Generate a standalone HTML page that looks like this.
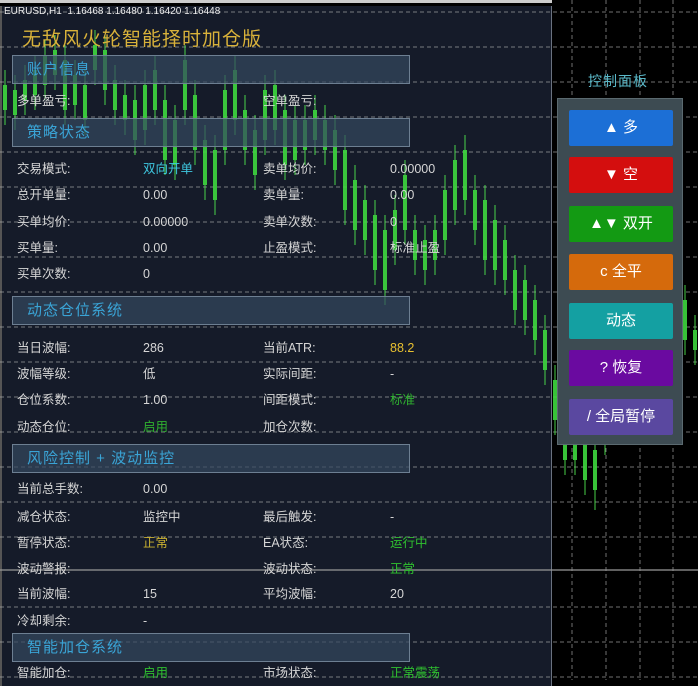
<!DOCTYPE html>
<html><head><meta charset="utf-8"><style>
*{margin:0;padding:0;box-sizing:border-box}
body{width:698px;height:680px;background:#000;position:relative;overflow:hidden;font-family:"Liberation Sans","Noto Sans CJK SC",sans-serif}
.abs{position:absolute}
#panel{position:absolute;left:0;top:6px;width:552px;height:680px;background:#151b29;border-right:1px solid #6a7280;border-left:2px solid #555}
.hdr{position:absolute;left:12px;width:398px;height:29px;background:rgba(52,72,95,0.7);border:1.5px solid #6d7f92;color:#3aa4d6;font-size:15px;line-height:27px;padding-left:14px;letter-spacing:1px}
.t{position:absolute;font-size:12.5px;line-height:16px;height:16px;color:#d6d6d6;white-space:nowrap}
.btn{position:absolute;left:569px;width:104px;height:36px;color:#fff;font-size:15px;text-align:center;line-height:36px;border-radius:2px}
</style></head><body>
<div id="panel"></div>
<svg class="abs" style="left:0;top:0" width="698" height="680">
<g stroke="#bbb" stroke-width="1" stroke-dasharray="4,3" opacity="0.6">
<path d="M0 12H698M0 47H698M0 82H698M0 117H698M0 152H698M0 187H698M0 222H698M0 257H698M0 292H698M0 327H698M0 362H698M0 397H698M0 432H698M0 467H698M0 502H698M0 537H698M0 607H698M0 642H698M0 677H698"/>
<path d="M572 0V680M606 0V680M640 0V680M673 0V680"/>
</g>
<path d="M0 570H698" stroke="#999" stroke-width="1.2"/>
<g opacity="0.9">
<g stroke="#4fe84f" stroke-width="1">
<path d="M5 70V125M15 75V130M25 65V115M35 55V110M45 40V100M55 35V90M65 45V125M75 60V120M85 70V135M95 30V85M105 35V105M115 65V125M125 80V135M135 85V155M145 70V145M155 55V125M165 85V175M175 105V180M185 45V125M195 80V165M205 125V200M215 135V215M225 75V165M235 55V135M245 95V165M255 115V190M265 75V155M275 70V145M285 95V180M295 105V175M305 105V165M315 95V155M325 105V165M335 115V185M345 135V225M355 165V245M365 185V255M375 200V285M385 215V305M395 195V265M405 160V245M415 215V275M425 225V285M435 215V275M445 175V255M455 145V225M465 135V215M475 175V245M485 185V275M495 205V285M505 225V295M515 255V325M525 265V335M535 285V355M545 315V385M555 365V435M565 405V475M575 415V475M585 430V495M595 435V510M605 385V455M615 355V425M625 315V395M635 285V355M645 265V335M655 235V305M665 245V315M675 265V335M685 285V355M695 315V365"/>
</g>
<g stroke="#3fd83f" stroke-width="4">
<path d="M5 85V110M15 90V115M25 80V100M35 70V95M45 55V85M55 50V75M65 60V110M75 75V105M85 85V120M95 45V70M105 50V90M115 80V110M125 95V120M135 100V140M145 85V130M155 70V110M165 100V160M175 120V165M185 60V110M195 95V150M205 140V185M215 150V200M225 90V150M235 70V120M245 110V150M255 130V175M265 90V140M275 85V130M285 110V165M295 120V160M305 120V150M315 110V140M325 120V150M335 130V170M345 150V210M355 180V230M365 200V240M375 215V270M385 230V290M395 210V250M405 175V230M415 230V260M425 240V270M435 230V260M445 190V240M455 160V210M465 150V200M475 190V230M485 200V260M495 220V270M505 240V280M515 270V310M525 280V320M535 300V340M545 330V370M555 380V420M565 420V460M575 430V460M585 445V480M595 450V490M605 400V440M615 370V410M625 330V380M635 300V340M645 280V320M655 250V290M665 260V300M675 280V320M685 300V340M695 330V350"/>
</g>
</g>
</svg>
<div class="abs" style="left:0;top:0;width:552px;height:3px;background:#ccc"></div>
<div class="t" style="left:4px;top:4px;font-size:10px;color:#eee">EURUSD,H1 &nbsp;1.16468 1.16480 1.16420 1.16448</div>
<div class="abs" style="left:22px;top:24px;font-size:19px;color:#d9b23a;letter-spacing:1px">无敌风火轮智能择时加仓版</div>

<div class="hdr" style="top:55px">账户信息</div>
<div class="t" style="left:17px;top:93px">多单盈亏:</div><div class="t" style="left:263px;top:93px">空单盈亏:</div>
<div class="hdr" style="top:118px">策略状态</div>
<div class="t" style="left:17px;top:161px">交易模式:</div><div class="t" style="left:143px;top:161px;color:#3ec8e0">双向开单</div><div class="t" style="left:263px;top:161px">卖单均价:</div><div class="t" style="left:390px;top:161px">0.00000</div>
<div class="t" style="left:17px;top:187px">总开单量:</div><div class="t" style="left:143px;top:187px">0.00</div><div class="t" style="left:263px;top:187px">卖单量:</div><div class="t" style="left:390px;top:187px">0.00</div>
<div class="t" style="left:17px;top:214px">买单均价:</div><div class="t" style="left:143px;top:214px">0.00000</div><div class="t" style="left:263px;top:214px">卖单次数:</div><div class="t" style="left:390px;top:214px">0</div>
<div class="t" style="left:17px;top:240px">买单量:</div><div class="t" style="left:143px;top:240px">0.00</div><div class="t" style="left:263px;top:240px">止盈模式:</div><div class="t" style="left:390px;top:240px">标准止盈</div>
<div class="t" style="left:17px;top:266px">买单次数:</div><div class="t" style="left:143px;top:266px">0</div>

<div class="hdr" style="top:296px">动态仓位系统</div>
<div class="t" style="left:17px;top:340px">当日波幅:</div><div class="t" style="left:143px;top:340px">286</div><div class="t" style="left:263px;top:340px">当前ATR:</div><div class="t" style="left:390px;top:340px;color:#e8c030">88.2</div>
<div class="t" style="left:17px;top:366px">波幅等级:</div><div class="t" style="left:143px;top:366px">低</div><div class="t" style="left:263px;top:366px">实际间距:</div><div class="t" style="left:390px;top:366px">-</div>
<div class="t" style="left:17px;top:392px">仓位系数:</div><div class="t" style="left:143px;top:392px">1.00</div><div class="t" style="left:263px;top:392px">间距模式:</div><div class="t" style="left:390px;top:392px;color:#2fb02f">标准</div>
<div class="t" style="left:17px;top:419px">动态仓位:</div><div class="t" style="left:143px;top:419px;color:#2fb02f">启用</div><div class="t" style="left:263px;top:419px">加仓次数:</div>

<div class="hdr" style="top:444px">风险控制 + 波动监控</div>
<div class="t" style="left:17px;top:481px">当前总手数:</div><div class="t" style="left:143px;top:481px">0.00</div>
<div class="t" style="left:17px;top:509px">减仓状态:</div><div class="t" style="left:143px;top:509px">监控中</div><div class="t" style="left:263px;top:509px">最后触发:</div><div class="t" style="left:390px;top:509px">-</div>
<div class="t" style="left:17px;top:535px">暂停状态:</div><div class="t" style="left:143px;top:535px;color:#c8b030">正常</div><div class="t" style="left:263px;top:535px">EA状态:</div><div class="t" style="left:390px;top:535px;color:#2fc02f">运行中</div>
<div class="t" style="left:17px;top:561px">波动警报:</div><div class="t" style="left:263px;top:561px">波动状态:</div><div class="t" style="left:390px;top:561px;color:#2fc02f">正常</div>
<div class="t" style="left:17px;top:586px">当前波幅:</div><div class="t" style="left:143px;top:586px">15</div><div class="t" style="left:263px;top:586px">平均波幅:</div><div class="t" style="left:390px;top:586px">20</div>
<div class="t" style="left:17px;top:613px">冷却剩余:</div><div class="t" style="left:143px;top:613px">-</div>

<div class="hdr" style="top:633px">智能加仓系统</div>
<div class="t" style="left:17px;top:665px">智能加仓:</div><div class="t" style="left:143px;top:665px;color:#2fc02f">启用</div><div class="t" style="left:263px;top:665px">市场状态:</div><div class="t" style="left:390px;top:665px;color:#2fc02f">正常震荡</div>

<div class="abs" style="left:588px;top:71px;font-size:14px;color:#5ab8c8;letter-spacing:1px">控制面板</div>
<div class="abs" style="left:557px;top:98px;width:126px;height:347px;background:#3d4b52;border:1px solid #5b6a70"></div>
<div class="btn" style="top:110px;background:#1c6fd6">▲ 多</div>
<div class="btn" style="top:157px;background:#d40e0e">▼ 空</div>
<div class="btn" style="top:206px;background:#139a13">▲▼ 双开</div>
<div class="btn" style="top:254px;background:#d56a0c">c 全平</div>
<div class="btn" style="top:303px;background:#14a0a2">动态</div>
<div class="btn" style="top:350px;background:#6a0aa0">? 恢复</div>
<div class="btn" style="top:399px;background:#5a48a0">/ 全局暂停</div>
</body></html>
